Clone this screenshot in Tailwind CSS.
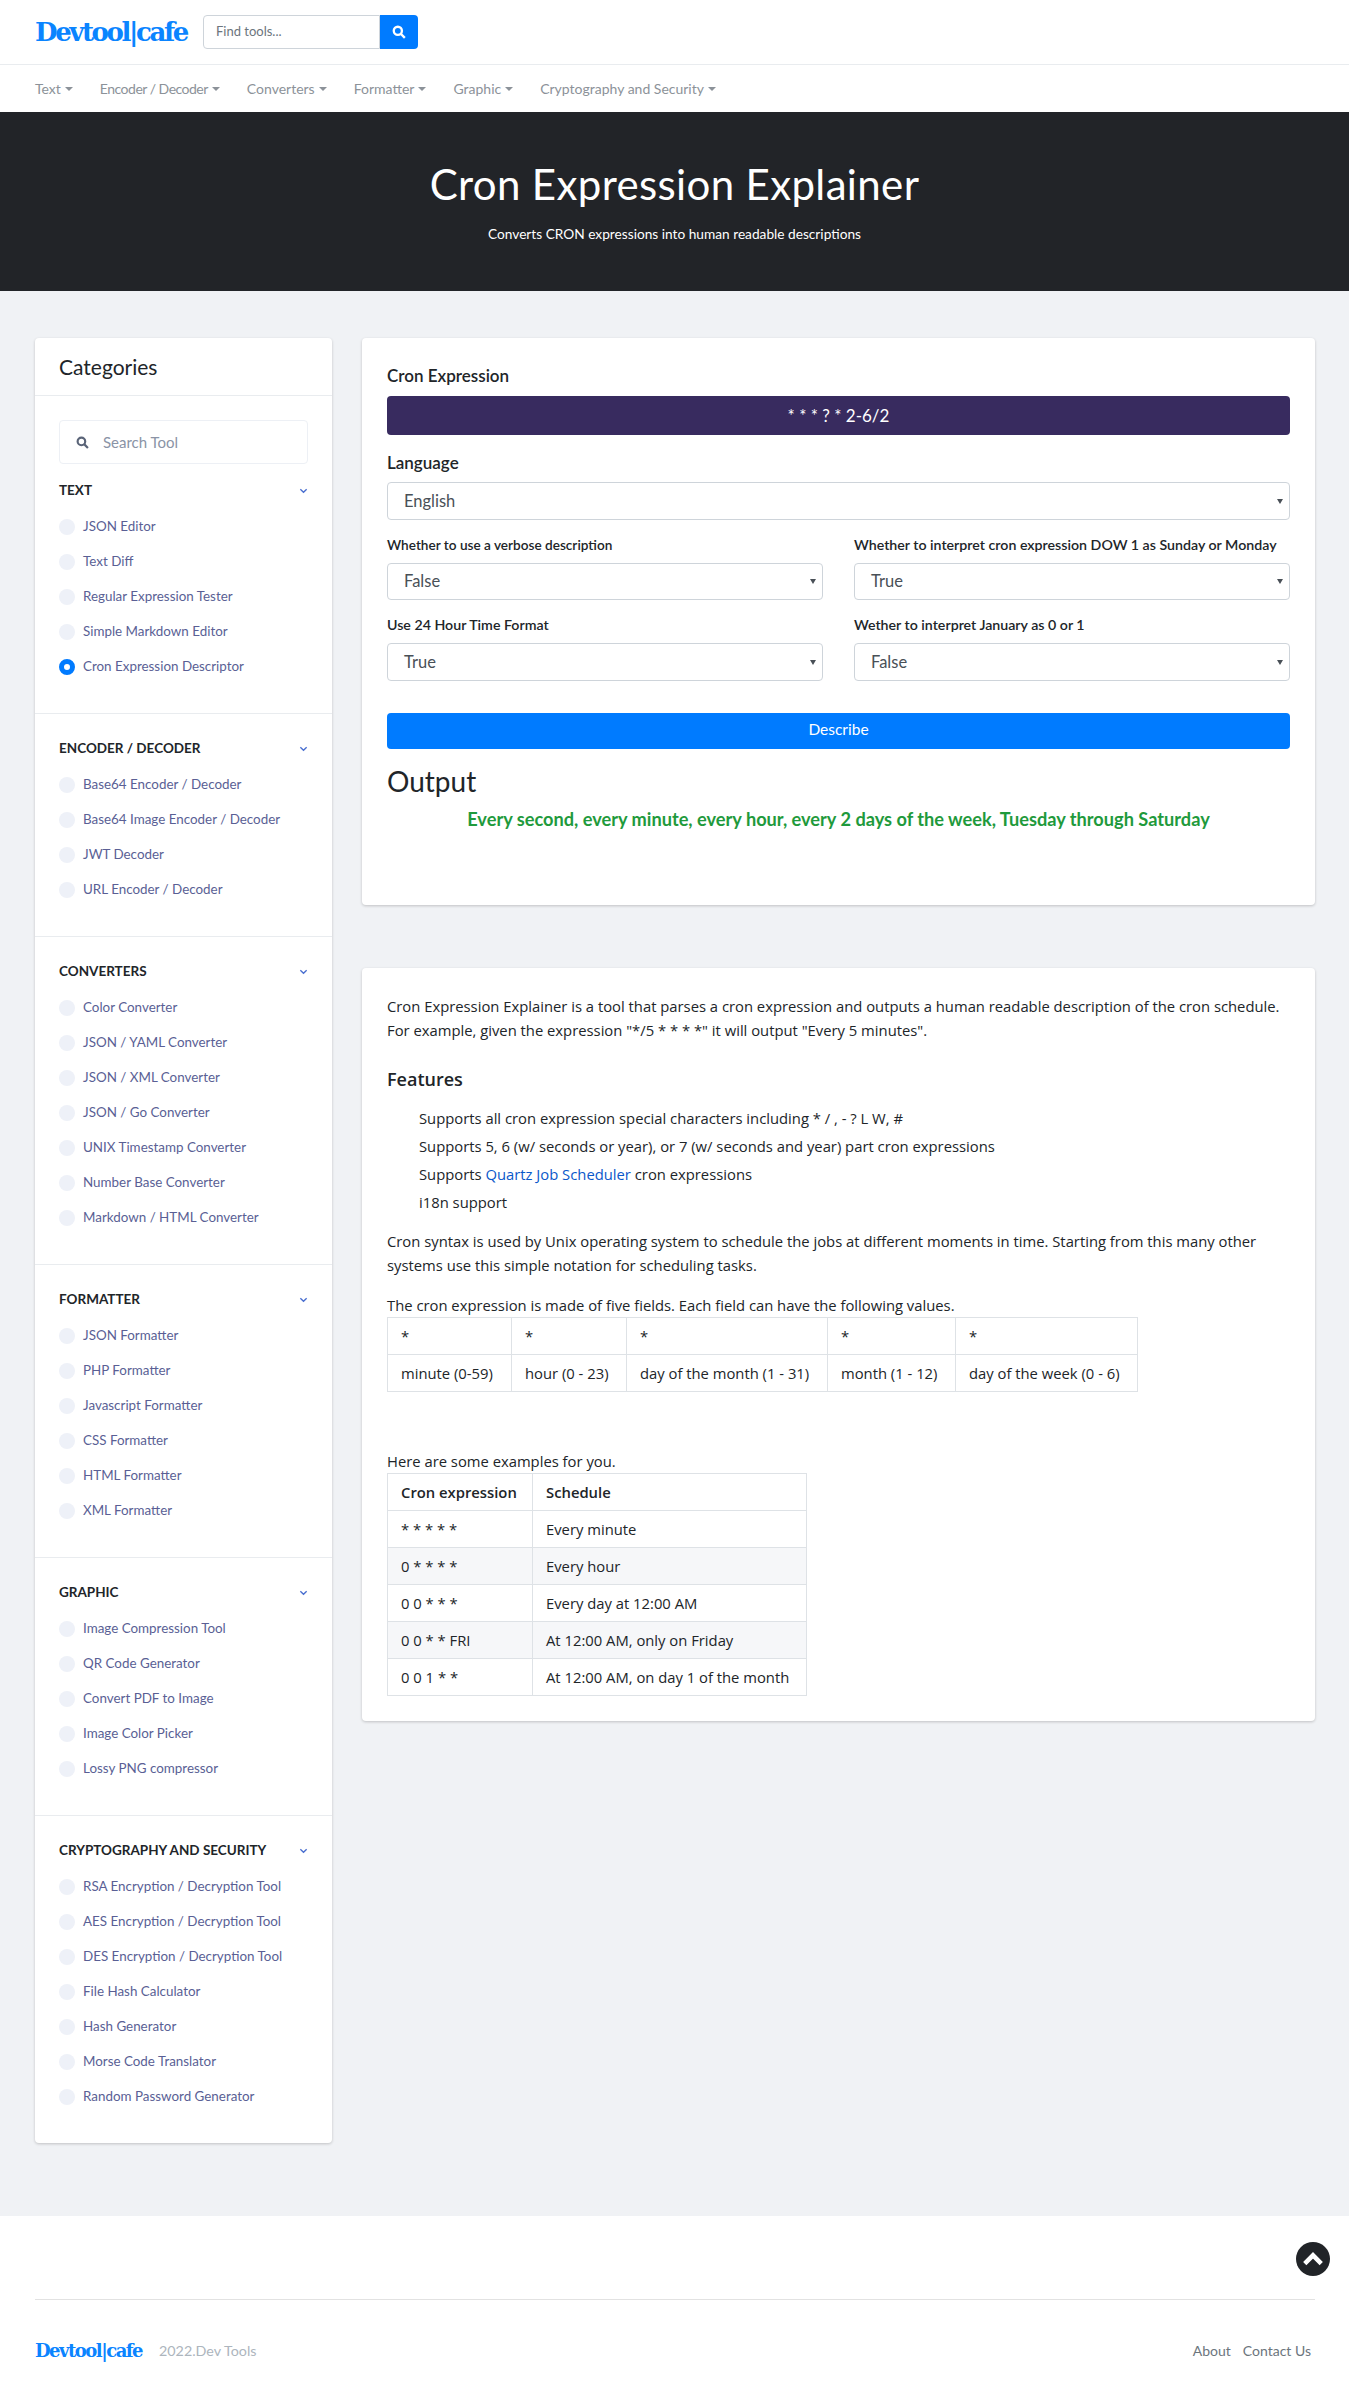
<!DOCTYPE html>
<html lang="en">
<head>
    <meta charset="UTF-8">
    <title>Cron Expression Explainer</title>
    <script src="https://cdn.jsdelivr.net/npm/@tailwindcss/browser@4"></script>
</head>
<body class="bg-[#f0f2f5] font-['Lato',sans-serif] text-[#212529]">
    <!-- Top bar -->
    <header class="bg-white">
        <div class="h-[65px] px-[35px] flex items-center border-b border-[#e9ecef]">
            <a class="w-[168px] text-[26px] leading-none font-bold text-[#0a84ff] font-['DejaVu_Serif',serif] tracking-[-2.4px]">Devtool|cafe</a>
            <div class="flex h-[34px]">
                <div class="w-[177px] px-3 border border-[#ced4da] rounded-l flex items-center text-[13px] text-[#6c757d]">Find tools...</div>
                <button class="w-[38px] bg-[#007bff] rounded-r flex items-center justify-center">
                    <svg class="w-3.5 h-3.5" viewBox="0 0 24 24" fill="none" stroke="white" stroke-width="4"><circle cx="10" cy="10" r="7"/><path d="M15 15l7 7"/></svg>
                </button>
            </div>
        </div>
        <nav class="h-[47px] px-[35px] flex items-center gap-[27px] text-[14px] text-[#8c9299]">
            <a class="flex items-center gap-1">Text<span class="border-x-4 border-t-4 border-x-transparent border-t-[#8c9299]"></span></a>
            <a class="flex items-center gap-1 tracking-[-0.5px]">Encoder / Decoder<span class="border-x-4 border-t-4 border-x-transparent border-t-[#8c9299]"></span></a>
            <a class="flex items-center gap-1">Converters<span class="border-x-4 border-t-4 border-x-transparent border-t-[#8c9299]"></span></a>
            <a class="flex items-center gap-1">Formatter<span class="border-x-4 border-t-4 border-x-transparent border-t-[#8c9299]"></span></a>
            <a class="flex items-center gap-1">Graphic<span class="border-x-4 border-t-4 border-x-transparent border-t-[#8c9299]"></span></a>
            <a class="flex items-center gap-1">Cryptography and Security<span class="border-x-4 border-t-4 border-x-transparent border-t-[#8c9299]"></span></a>
        </nav>
    </header>

    <!-- Hero -->
    <section class="h-[179px] bg-[#222428] flex flex-col items-center text-white">
        <h1 class="mt-[47px] text-[42px] leading-[50px] font-normal tracking-[0.36px]">Cron Expression Explainer</h1>
        <p class="mt-[15px] text-[13.7px] leading-5">Converts CRON expressions into human readable descriptions</p>
    </section>

    <div class="flex items-start gap-[30px] pl-[35px] pr-[34px] pt-[47px] pb-[73px]">
        <!-- Categories -->
        <aside class="w-[297px] bg-white rounded shadow-[0_1px_3px_rgba(0,0,0,0.2)]">
            <h2 class="h-[58px] px-6 flex items-center text-[21px] text-[#212529] border-b border-[#e9ecef]">Categories</h2>
            <div class="px-6 pt-6 pb-[29px] border-b border-[#e9ecef]">
                <div class="h-[44px] px-4 flex items-center gap-[14px] border border-[#edf0f5] rounded text-[15px] text-[#8a93a6]">
                    <svg class="w-[13px] h-[13px]" viewBox="0 0 24 24" fill="none" stroke="#5a6478" stroke-width="4"><circle cx="10" cy="10" r="7"/><path d="M15 15l7 7"/></svg>
                    Search Tool
                </div>
                <div class="mt-[16px] h-5 flex items-center justify-between text-[13.5px] font-bold text-[#212529]">TEXT
                    <svg class="w-[9px] h-[9px]" viewBox="0 0 10 10" fill="none" stroke="#4a6fd0" stroke-width="1.5"><path d="M1.5 3.5l3.5 3.5 3.5-3.5"/></svg>
                </div>
                <ul class="mt-[9px] text-[13.4px] text-[#5a5f95]">
                    <li class="h-[35px] flex items-center gap-2"><span class="w-4 h-4 rounded-full bg-[#eef1f8]"></span>JSON Editor</li>
                    <li class="h-[35px] flex items-center gap-2"><span class="w-4 h-4 rounded-full bg-[#eef1f8]"></span>Text Diff</li>
                    <li class="h-[35px] flex items-center gap-2"><span class="w-4 h-4 rounded-full bg-[#eef1f8]"></span>Regular Expression Tester</li>
                    <li class="h-[35px] flex items-center gap-2"><span class="w-4 h-4 rounded-full bg-[#eef1f8]"></span>Simple Markdown Editor</li>
                    <li class="h-[35px] flex items-center gap-2"><span class="w-4 h-4 rounded-full border-[5px] border-[#007bff] bg-white"></span>Cron Expression Descriptor</li>
                </ul>
            </div>
            <div class="px-6 pt-6 pb-[29px] border-b border-[#e9ecef]">
                <div class="h-5 flex items-center justify-between text-[13.5px] font-bold text-[#212529]">ENCODER / DECODER
                    <svg class="w-[9px] h-[9px]" viewBox="0 0 10 10" fill="none" stroke="#4a6fd0" stroke-width="1.5"><path d="M1.5 3.5l3.5 3.5 3.5-3.5"/></svg>
                </div>
                <ul class="mt-[9px] text-[13.4px] text-[#5a5f95]">
                    <li class="h-[35px] flex items-center gap-2"><span class="w-4 h-4 rounded-full bg-[#eef1f8]"></span>Base64 Encoder / Decoder</li>
                    <li class="h-[35px] flex items-center gap-2"><span class="w-4 h-4 rounded-full bg-[#eef1f8]"></span>Base64 Image Encoder / Decoder</li>
                    <li class="h-[35px] flex items-center gap-2"><span class="w-4 h-4 rounded-full bg-[#eef1f8]"></span>JWT Decoder</li>
                    <li class="h-[35px] flex items-center gap-2"><span class="w-4 h-4 rounded-full bg-[#eef1f8]"></span>URL Encoder / Decoder</li>
                </ul>
            </div>
            <div class="px-6 pt-6 pb-[29px] border-b border-[#e9ecef]">
                <div class="h-5 flex items-center justify-between text-[13.5px] font-bold text-[#212529]">CONVERTERS
                    <svg class="w-[9px] h-[9px]" viewBox="0 0 10 10" fill="none" stroke="#4a6fd0" stroke-width="1.5"><path d="M1.5 3.5l3.5 3.5 3.5-3.5"/></svg>
                </div>
                <ul class="mt-[9px] text-[13.4px] text-[#5a5f95]">
                    <li class="h-[35px] flex items-center gap-2"><span class="w-4 h-4 rounded-full bg-[#eef1f8]"></span>Color Converter</li>
                    <li class="h-[35px] flex items-center gap-2"><span class="w-4 h-4 rounded-full bg-[#eef1f8]"></span>JSON / YAML Converter</li>
                    <li class="h-[35px] flex items-center gap-2"><span class="w-4 h-4 rounded-full bg-[#eef1f8]"></span>JSON / XML Converter</li>
                    <li class="h-[35px] flex items-center gap-2"><span class="w-4 h-4 rounded-full bg-[#eef1f8]"></span>JSON / Go Converter</li>
                    <li class="h-[35px] flex items-center gap-2"><span class="w-4 h-4 rounded-full bg-[#eef1f8]"></span>UNIX Timestamp Converter</li>
                    <li class="h-[35px] flex items-center gap-2"><span class="w-4 h-4 rounded-full bg-[#eef1f8]"></span>Number Base Converter</li>
                    <li class="h-[35px] flex items-center gap-2"><span class="w-4 h-4 rounded-full bg-[#eef1f8]"></span>Markdown / HTML Converter</li>
                </ul>
            </div>
            <div class="px-6 pt-6 pb-[29px] border-b border-[#e9ecef]">
                <div class="h-5 flex items-center justify-between text-[13.5px] font-bold text-[#212529]">FORMATTER
                    <svg class="w-[9px] h-[9px]" viewBox="0 0 10 10" fill="none" stroke="#4a6fd0" stroke-width="1.5"><path d="M1.5 3.5l3.5 3.5 3.5-3.5"/></svg>
                </div>
                <ul class="mt-[9px] text-[13.4px] text-[#5a5f95]">
                    <li class="h-[35px] flex items-center gap-2"><span class="w-4 h-4 rounded-full bg-[#eef1f8]"></span>JSON Formatter</li>
                    <li class="h-[35px] flex items-center gap-2"><span class="w-4 h-4 rounded-full bg-[#eef1f8]"></span>PHP Formatter</li>
                    <li class="h-[35px] flex items-center gap-2"><span class="w-4 h-4 rounded-full bg-[#eef1f8]"></span>Javascript Formatter</li>
                    <li class="h-[35px] flex items-center gap-2"><span class="w-4 h-4 rounded-full bg-[#eef1f8]"></span>CSS Formatter</li>
                    <li class="h-[35px] flex items-center gap-2"><span class="w-4 h-4 rounded-full bg-[#eef1f8]"></span>HTML Formatter</li>
                    <li class="h-[35px] flex items-center gap-2"><span class="w-4 h-4 rounded-full bg-[#eef1f8]"></span>XML Formatter</li>
                </ul>
            </div>
            <div class="px-6 pt-6 pb-[29px] border-b border-[#e9ecef]">
                <div class="h-5 flex items-center justify-between text-[13.5px] font-bold text-[#212529]">GRAPHIC
                    <svg class="w-[9px] h-[9px]" viewBox="0 0 10 10" fill="none" stroke="#4a6fd0" stroke-width="1.5"><path d="M1.5 3.5l3.5 3.5 3.5-3.5"/></svg>
                </div>
                <ul class="mt-[9px] text-[13.4px] text-[#5a5f95]">
                    <li class="h-[35px] flex items-center gap-2"><span class="w-4 h-4 rounded-full bg-[#eef1f8]"></span>Image Compression Tool</li>
                    <li class="h-[35px] flex items-center gap-2"><span class="w-4 h-4 rounded-full bg-[#eef1f8]"></span>QR Code Generator</li>
                    <li class="h-[35px] flex items-center gap-2"><span class="w-4 h-4 rounded-full bg-[#eef1f8]"></span>Convert PDF to Image</li>
                    <li class="h-[35px] flex items-center gap-2"><span class="w-4 h-4 rounded-full bg-[#eef1f8]"></span>Image Color Picker</li>
                    <li class="h-[35px] flex items-center gap-2"><span class="w-4 h-4 rounded-full bg-[#eef1f8]"></span>Lossy PNG compressor</li>
                </ul>
            </div>
            <div class="px-6 pt-6 pb-[29px]">
                <div class="h-5 flex items-center justify-between text-[13.5px] font-bold text-[#212529]">CRYPTOGRAPHY AND SECURITY
                    <svg class="w-[9px] h-[9px]" viewBox="0 0 10 10" fill="none" stroke="#4a6fd0" stroke-width="1.5"><path d="M1.5 3.5l3.5 3.5 3.5-3.5"/></svg>
                </div>
                <ul class="mt-[9px] text-[13.4px] text-[#5a5f95]">
                    <li class="h-[35px] flex items-center gap-2"><span class="w-4 h-4 rounded-full bg-[#eef1f8]"></span>RSA Encryption / Decryption Tool</li>
                    <li class="h-[35px] flex items-center gap-2"><span class="w-4 h-4 rounded-full bg-[#eef1f8]"></span>AES Encryption / Decryption Tool</li>
                    <li class="h-[35px] flex items-center gap-2"><span class="w-4 h-4 rounded-full bg-[#eef1f8]"></span>DES Encryption / Decryption Tool</li>
                    <li class="h-[35px] flex items-center gap-2"><span class="w-4 h-4 rounded-full bg-[#eef1f8]"></span>File Hash Calculator</li>
                    <li class="h-[35px] flex items-center gap-2"><span class="w-4 h-4 rounded-full bg-[#eef1f8]"></span>Hash Generator</li>
                    <li class="h-[35px] flex items-center gap-2"><span class="w-4 h-4 rounded-full bg-[#eef1f8]"></span>Morse Code Translator</li>
                    <li class="h-[35px] flex items-center gap-2"><span class="w-4 h-4 rounded-full bg-[#eef1f8]"></span>Random Password Generator</li>
                </ul>
            </div>
        </aside>

        <main class="flex-1 flex flex-col gap-[63px]">
            <!-- Tool card -->
            <section class="h-[567px] bg-white rounded shadow-[0_1px_3px_rgba(0,0,0,0.2)] px-[25px] pt-[26px]">
                <label class="block text-[17px] leading-6 font-semibold">Cron Expression</label>
                <div class="mt-[8px] h-[39px] bg-[#382b5f] rounded-sm text-white text-[17px] flex items-center justify-center">* * * ? * 2-6/2</div>
                <label class="block mt-4 text-[17px] leading-6 font-semibold">Language</label>
                <div class="mt-[7px] h-[38px] px-4 border border-[#ced4da] rounded flex items-center justify-between text-[16.5px] text-[#495057]">English<span class="-mr-[10px] border-x-[3px] border-t-[5px] border-x-transparent border-t-[#495057]"></span></div>
                <div class="grid grid-cols-2 gap-x-[31px]">
                    <div>
                        <label class="block mt-[13px] h-[24px] text-[13.6px] leading-6 font-semibold">Whether to use a verbose description</label>
                        <div class="mt-[6px] h-[37px] px-4 border border-[#ced4da] rounded flex items-center justify-between text-[16.5px] text-[#495057]">False<span class="-mr-[10px] border-x-[3px] border-t-[5px] border-x-transparent border-t-[#495057]"></span></div>
                    </div>
                    <div>
                        <label class="block mt-[13px] h-[24px] text-[14.2px] leading-6 font-semibold">Whether to interpret cron expression DOW 1 as Sunday or Monday</label>
                        <div class="mt-[6px] h-[37px] px-4 border border-[#ced4da] rounded flex items-center justify-between text-[16.5px] text-[#495057]">True<span class="-mr-[10px] border-x-[3px] border-t-[5px] border-x-transparent border-t-[#495057]"></span></div>
                    </div>
                    <div>
                        <label class="block mt-[13px] h-[24px] text-[14.2px] leading-6 font-semibold">Use 24 Hour Time Format</label>
                        <div class="mt-[6px] h-[38px] px-4 border border-[#ced4da] rounded flex items-center justify-between text-[16.5px] text-[#495057]">True<span class="-mr-[10px] border-x-[3px] border-t-[5px] border-x-transparent border-t-[#495057]"></span></div>
                    </div>
                    <div>
                        <label class="block mt-[13px] h-[24px] text-[14.2px] leading-6 font-semibold">Wether to interpret January as 0 or 1</label>
                        <div class="mt-[6px] h-[38px] px-4 border border-[#ced4da] rounded flex items-center justify-between text-[16.5px] text-[#495057]">False<span class="-mr-[10px] border-x-[3px] border-t-[5px] border-x-transparent border-t-[#495057]"></span></div>
                    </div>
                </div>
                <button class="block w-full mt-8 h-[36px] pb-0.5 bg-[#007bff] rounded-sm text-white text-[15.5px]">Describe</button>
                <h3 class="mt-[13px] text-[28px] leading-[38px] text-[#212529]">Output</h3>
                <p class="mt-[7px] text-center text-[18.2px] font-bold leading-6 text-[#1f9a3c]">Every second, every minute, every hour, every 2 days of the week, Tuesday through Saturday</p>
            </section>

            <!-- Article card -->
            <section class="h-[753px] bg-white rounded shadow-[0_1px_3px_rgba(0,0,0,0.2)] px-[25px] pt-[26px] font-['Open_Sans',sans-serif] text-[14.8px] leading-6 text-[#212529]">
                <p>Cron Expression Explainer is a tool that parses a cron expression and outputs a human readable description of the cron schedule. For example, given the expression "*/5 * * * *" it will output "Every 5 minutes".</p>
                <h4 class="mt-[25px] text-[18px] leading-6 font-semibold">Features</h4>
                <ul class="mt-[13px] pl-8">
                    <li class="h-[28px] leading-[28px]">Supports all cron expression special characters including * / , - ? L W, #</li>
                    <li class="h-[28px] leading-[28px]">Supports 5, 6 (w/ seconds or year), or 7 (w/ seconds and year) part cron expressions</li>
                    <li class="h-[28px] leading-[28px]">Supports <a class="text-[#0a58ca]">Quartz Job Scheduler</a> cron expressions</li>
                    <li class="h-[28px] leading-[28px]">i18n support</li>
                </ul>
                <p class="mt-[13px]">Cron syntax is used by Unix operating system to schedule the jobs at different moments in time. Starting from this many other systems use this simple notation for scheduling tasks.</p>
                <p class="mt-[16px]">The cron expression is made of five fields. Each field can have the following values.</p>
                <table class="border-collapse">
                    <tr class="h-[37px]">
                        <td class="border border-[#dee2e6] px-[13px] w-[124px] align-top pt-1.5">*</td>
                        <td class="border border-[#dee2e6] px-[13px] w-[115px] align-top pt-1.5">*</td>
                        <td class="border border-[#dee2e6] px-[13px] w-[201px] align-top pt-1.5">*</td>
                        <td class="border border-[#dee2e6] px-[13px] w-[128px] align-top pt-1.5">*</td>
                        <td class="border border-[#dee2e6] px-[13px] w-[182px] align-top pt-1.5">*</td>
                    </tr>
                    <tr class="h-[37px]">
                        <td class="border border-[#dee2e6] px-[13px]">minute (0-59)</td>
                        <td class="border border-[#dee2e6] px-[13px]">hour (0 - 23)</td>
                        <td class="border border-[#dee2e6] px-[13px]">day of the month (1 - 31)</td>
                        <td class="border border-[#dee2e6] px-[13px]">month (1 - 12)</td>
                        <td class="border border-[#dee2e6] px-[13px]">day of the week (0 - 6)</td>
                    </tr>
                </table>
                <p class="mt-[57px]">Here are some examples for you.</p>
                <table class="border-collapse">
                    <tr class="h-[37px] font-semibold">
                        <td class="border border-[#dee2e6] px-[13px] w-[145px]">Cron expression</td>
                        <td class="border border-[#dee2e6] px-[13px] w-[274px]">Schedule</td>
                    </tr>
                    <tr class="h-[37px]">
                        <td class="border border-[#dee2e6] px-[13px]">* * * * *</td>
                        <td class="border border-[#dee2e6] px-[13px]">Every minute</td>
                    </tr>
                    <tr class="h-[37px] bg-[#f6f7f9]">
                        <td class="border border-[#dee2e6] px-[13px]">0 * * * *</td>
                        <td class="border border-[#dee2e6] px-[13px]">Every hour</td>
                    </tr>
                    <tr class="h-[37px]">
                        <td class="border border-[#dee2e6] px-[13px]">0 0 * * *</td>
                        <td class="border border-[#dee2e6] px-[13px]">Every day at 12:00 AM</td>
                    </tr>
                    <tr class="h-[37px] bg-[#f6f7f9]">
                        <td class="border border-[#dee2e6] px-[13px]">0 0 * * FRI</td>
                        <td class="border border-[#dee2e6] px-[13px]">At 12:00 AM, only on Friday</td>
                    </tr>
                    <tr class="h-[37px]">
                        <td class="border border-[#dee2e6] px-[13px]">0 0 1 * *</td>
                        <td class="border border-[#dee2e6] px-[13px]">At 12:00 AM, on day 1 of the month</td>
                    </tr>
                </table>
            </section>
        </main>
    </div>

    <!-- Footer -->
    <footer class="bg-white h-[183px] pl-[35px] pr-[34px] relative">
        <div class="h-[84px] border-b border-[#e2e2e2] relative">
            <a class="absolute right-[-15px] top-[26px] w-[34px] h-[34px] rounded-full bg-[#212428] flex items-center justify-center">
                <svg class="w-[22px] h-[22px]" viewBox="0 0 24 24" fill="none" stroke="white" stroke-width="5"><path d="M3 17l9-9 9 9"/></svg>
            </a>
        </div>
        <div class="mt-[40px] flex items-center justify-between text-[14px]">
            <div class="flex items-center gap-4">
                <a class="w-[108px] text-[18px] leading-none font-bold text-[#0a84ff] font-['DejaVu_Serif',serif] tracking-[-1.5px]">Devtool|cafe</a>
                <span class="text-[14.3px] text-[#adb5bd]">2022.Dev Tools</span>
            </div>
            <div class="flex gap-3 pr-1 text-[#6c757d]">
                <a>About</a>
                <a>Contact Us</a>
            </div>
        </div>
    </footer>
</body>
</html>
